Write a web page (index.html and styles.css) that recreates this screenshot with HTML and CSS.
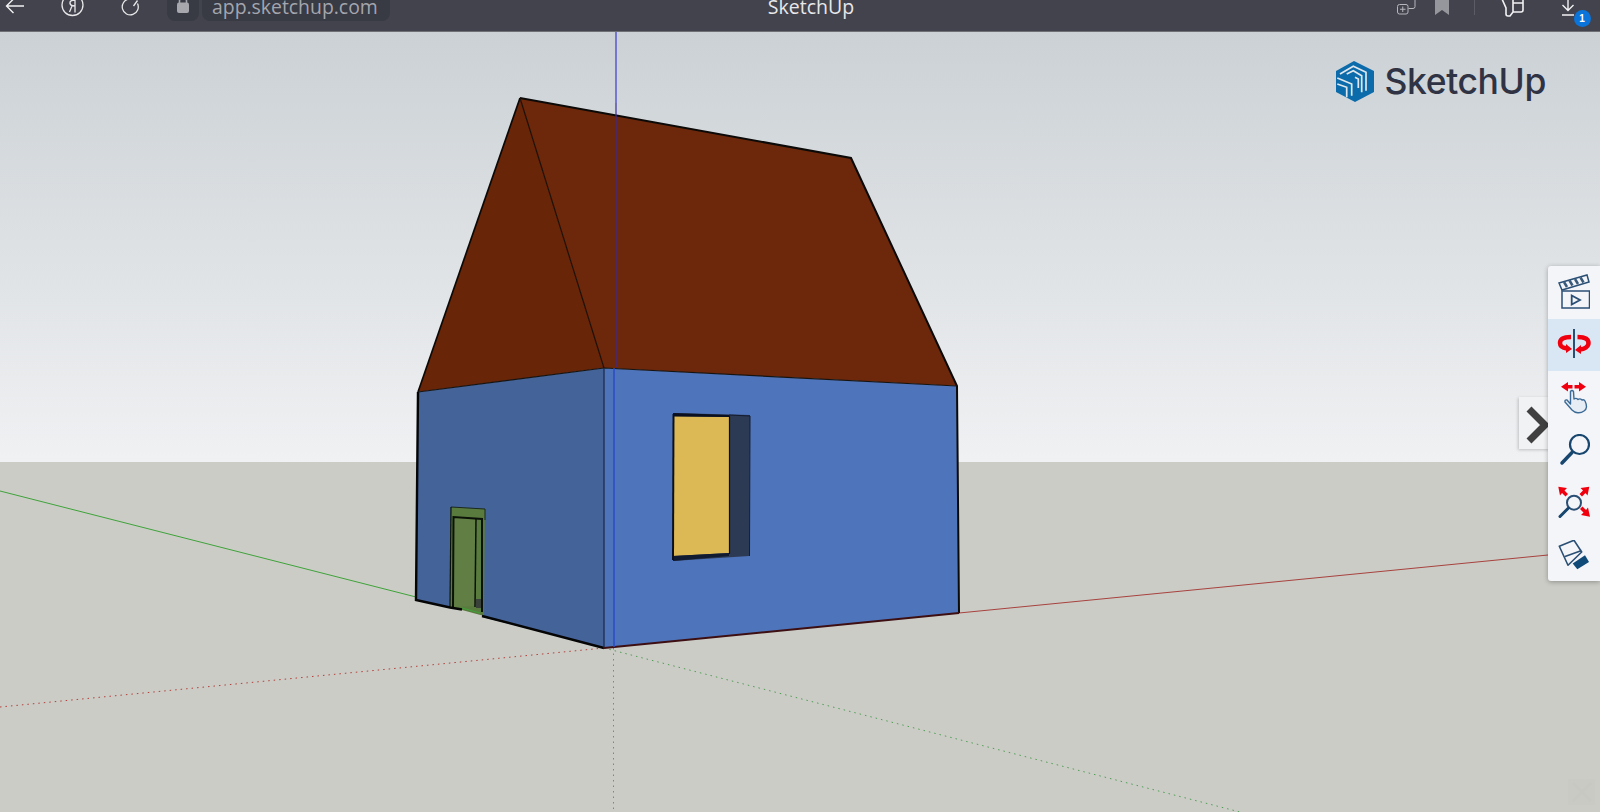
FILE: index.html
```html
<!DOCTYPE html>
<html lang="en">
<head>
<meta charset="utf-8">
<title>SketchUp</title>
<link rel="stylesheet" href="styles.css">
</head>
<body>
<div class="app">
  <header class="browser">
    <div class="nav">
      <svg class="ic back" width="26" height="20" viewBox="0 0 26 20"><path d="M21 6H3.500M10.500 -1L3.500 6L10.500 13" fill="none" stroke="#f2f2f4" stroke-width="1.400"/></svg>
      <svg class="ic yandex" width="24" height="20" viewBox="0 0 24 20"><circle cx="11.500" cy="5" r="10.500" fill="none" stroke="#e8e8ea" stroke-width="1.300"/><path d="M14 -1V12.500M14 0Q8.500 0 9 3.500Q9.500 6 14 6M11 6L8.500 12" fill="none" stroke="#e8e8ea" stroke-width="1.300"/></svg>
      <svg class="ic reload" width="20" height="20" viewBox="0 0 20 20"><path d="M17.500 3.500A8 8 0 1 1 9 -1M17.500 0.500L13.500 6" fill="none" stroke="#e8e8ea" stroke-width="1.300"/></svg>
      <div class="address">
        <span class="lock"><svg width="14" height="24" viewBox="0 0 14 24"><path d="M3.500 13V11A3.500 3.500 0 0 1 10.500 11V13" fill="none" stroke="#a6a8ae" stroke-width="1.600"/><rect x="1" y="12.500" width="12" height="10.500" rx="2" fill="#a6a8ae"/></svg></span>
        <span class="url">app.sketchup.com</span>
      </div>
    </div>
    <div class="title">SketchUp</div>
    <div class="actions">
      <svg class="ic tabs" width="22" height="16" viewBox="0 0 22 16"><rect x="1.500" y="4.500" width="10.500" height="9.500" rx="2" fill="none" stroke="#b6b7bc"/><path d="M6.750 6.500V12M4 9.250H9.500M12.500 8.500H17A2 2 0 0 0 19 6.500V0" fill="none" stroke="#b6b7bc"/></svg>
      <svg class="ic mark" width="16" height="16" viewBox="0 0 16 16"><path d="M1 -2H15V15L8 10L1 15Z" fill="#96979c"/></svg>
      <span class="sep"></span>
      <svg class="ic panel" width="26" height="18" viewBox="0 0 26 18"><path d="M1 -1L5 8V14Q5 16 7 16H9L12 12H20A2 2 0 0 0 22 10V-1M12 12V-1M12 3H22" fill="none" stroke="#f2f2f4" stroke-width="1.600"/></svg>
      <span class="download">
        <svg width="18" height="18" viewBox="0 0 18 18"><path d="M9 -2V10.500M3.500 5L9 10.500L14.500 5M3 15H15" fill="none" stroke="#f2f2f4" stroke-width="1.400"/></svg>
        <b class="badge">1</b>
      </span>
    </div>
  </header>

  <main class="viewport">
    <svg class="scene" width="1600" height="781" viewBox="0 31 1600 781">
      <defs>
        <linearGradient id="sky" x1="0" y1="31" x2="0" y2="462" gradientUnits="userSpaceOnUse">
          <stop offset="0" stop-color="#cbd1d5"/>
          <stop offset="1" stop-color="#f0f1f3"/>
        </linearGradient>
      </defs>
      <rect x="0" y="31" width="1600" height="431" fill="url(#sky)"/>
      <rect x="0" y="462" width="1600" height="350" fill="#cbccc6"/>

      <!-- axes -->
      <line x1="0" y1="491" x2="416" y2="597" stroke="#3fa33a" stroke-width="1"/>
      <line x1="959" y1="613" x2="1548" y2="555" stroke="#a8423e" stroke-width="1"/>
      <line x1="0" y1="707" x2="604" y2="648" stroke="#b4403c" stroke-width="1" stroke-dasharray="1.500 4"/>
      <line x1="604" y1="648" x2="1240" y2="812" stroke="#4f9e55" stroke-width="1" stroke-dasharray="1.500 4"/>
      <line x1="613.500" y1="648" x2="613.500" y2="812" stroke="#7a7ac8" stroke-width="1" stroke-dasharray="1.500 4"/>

      <!-- roof -->
      <polygon points="520,98 604,368 418,392" fill="#682508"/>
      <polygon points="520,98 851,158 957,386 604,368" fill="#6d270a"/>
      <!-- walls -->
      <polygon points="418,392 604,368 604,648 482,617 482,612 462,608 450,607 416,600" fill="#446399"/>
      <polygon points="604,368 957,386 959,613 604,648" fill="#4e74bb"/>

      <!-- window -->
      <polygon points="673,413 750,415 749,556 673,561" fill="#2d3a53"/>
      <polygon points="674,416 729,417 729,553 673,556" fill="#dcb954"/>
      <polygon points="673,413 729.500,415 729.500,417 673,416.500" fill="#0a1020"/>
      <polygon points="673,556 729,553 729,556 673,561" fill="#101a30"/>
      <line x1="673.500" y1="414" x2="673" y2="560" stroke="#0a1020" stroke-width="2"/>
      <line x1="729.500" y1="416" x2="729.500" y2="554" stroke="#0a1020" stroke-width="1.200"/>
      <polyline points="729,415 750,416 749.500,556" fill="none" stroke="#141c30" stroke-width="1"/>

      <!-- door -->
      <polygon points="451,507 485,509 484,616 462,610 450,607" fill="#5a7b3e"/>
      <polygon points="454,517 475,519 475,606 454,607" fill="#617f45"/>
      <polyline points="451,507 485,509 485,520" fill="none" stroke="#1a2a1c" stroke-width="1"/>
      <polyline points="453,608 453.500,517 482,519 482,612" fill="none" stroke="#0b1208" stroke-width="2"/>
      <line x1="476" y1="519" x2="475" y2="607" stroke="#0b1208" stroke-width="1.500"/>
      <line x1="451" y1="507" x2="450" y2="607" stroke="#0b1208" stroke-width="1.200"/>
      <line x1="462" y1="608" x2="480" y2="613" stroke="#3fa33a" stroke-width="1"/>
      <rect x="476" y="599" width="5" height="9" fill="#39413a"/>

      <!-- edges -->
      <path d="M520 98L851 158L957 386L959 613" fill="none" stroke="#0c0a08" stroke-width="2"/>
      <path d="M520 98L418 392" fill="none" stroke="#0c0a08" stroke-width="1.700"/>
      <path d="M418 392L416 600L450 607.500L462 609.500M482 616L604 648" fill="none" stroke="#050505" stroke-width="2.400"/>
      <path d="M520 98L604 368" fill="none" stroke="#1c0f08" stroke-width="1.200"/>
      <path d="M418 392L604 368L957 386" fill="none" stroke="#161412" stroke-width="1.200"/>
      <line x1="604" y1="368" x2="604" y2="648" stroke="#1f2c4a" stroke-width="1.300"/>
      <path d="M604 648L959 613" fill="none" stroke="#3d0f12" stroke-width="2"/>

      <!-- blue axis -->
      <line x1="616" y1="31" x2="616" y2="103" stroke="#3a3ad0" stroke-width="1.200"/>
      <line x1="616" y1="103" x2="616" y2="367" stroke="#3a2a9a" stroke-width="1.200"/>
      <line x1="614" y1="368" x2="614" y2="647" stroke="#2b4bc4" stroke-width="1.500"/>

      <!-- faint watermark -->
      <rect x="1568" y="779" width="27" height="26" fill="#c9cac4"/>
      <path d="M1573 783L1591 801M1591 783L1573 801" fill="none" stroke="#c7c8c2" stroke-width="3"/>
    </svg>

    <div class="logo">
      <svg width="40" height="42" viewBox="0 0 40 42">
        <path d="M19 0L39 10V31L20 41L1 31V10Z" fill="#0c6bab"/>
        <g fill="none" stroke="#dfe7ec" stroke-width="1.700">
          <path d="M5 13L18.300 5.300L31 11.300V29.700"/>
          <path d="M11.700 13L18.300 9.700L26.700 14.700V31.300"/>
          <path d="M20 16.300L23.300 18V27"/>
          <path d="M2.300 17L16.700 23V34.700"/>
          <path d="M2.300 23L11.700 26.300V36.300"/>
        </g>
      </svg>
      <span class="logo-text">SketchUp</span>
    </div>

    <button class="collapse" type="button" aria-label="Collapse">
      <svg width="31" height="52" viewBox="0 0 31 52"><path d="M10 12L26 28L10 44" fill="none" stroke="#404040" stroke-width="7"/></svg>
    </button>

    <nav class="tools">
      <div class="tool">
        <svg width="32" height="36" viewBox="0 0 32 36" fill="none" stroke="#2a4f75" stroke-width="1.500">
          <rect x="4" y="17" width="27.500" height="17"/>
          <path d="M1 9L29 1L31 8L4 16Z"/>
          <path d="M6 8L9 13M11.500 6.500L14.500 11.500M17 5L20 10M22.500 3.500L25.500 8.500" stroke-width="2.500" stroke="#3a5a7c"/>
          <path d="M13.700 21.500V30.500L22 26Z" stroke-width="1.800"/>
        </svg>
      </div>
      <div class="tool active">
        <svg width="34" height="32" viewBox="0 0 34 32">
          <path d="M17 0V29" stroke="#2a4f75" stroke-width="2" fill="none"/>
          <path d="M14 8C7 8 3 10 3 14C3 17 6 19 10 19.500" fill="none" stroke="#f0000f" stroke-width="4.500"/>
          <path d="M9 15L15 20L9 24Z" fill="#f0000f"/>
          <path d="M20.500 8C27 8 31.500 10 31.500 14C31.500 18 27 20 23 20.500" fill="none" stroke="#f0000f" stroke-width="4.500"/>
          <path d="M24 16L18 21L24 25Z" fill="#f0000f"/>
        </svg>
      </div>
      <div class="tool">
        <svg width="34" height="34" viewBox="0 0 34 34">
          <path d="M4 6.700L11 2V5H15.500V8.500H11V11.500ZM29 6.700L22 2V5H17.500V8.500H22V11.500Z" fill="#f0000f"/>
          <path d="M13.500 24V11.500Q15 9.500 16.500 11.500L17 19Q19 17.500 21 19.500Q23 18 25 20Q27 19 28 21C30 25 30 29 27 31C23 34 18 33 15 30L8 22Q7.500 19.500 10 20Z" fill="#e6edf4" stroke="#3b6a96" stroke-width="1.400" stroke-linejoin="round"/>
        </svg>
      </div>
      <div class="tool">
        <svg width="32" height="32" viewBox="0 0 32 32" fill="none" stroke="#17466f">
          <circle cx="21.500" cy="10.500" r="9.500" stroke-width="2.200"/>
          <path d="M14 18.500L4 29" stroke-width="3.500" stroke-linecap="round"/>
        </svg>
      </div>
      <div class="tool">
        <svg width="34" height="34" viewBox="0 0 34 34">
          <circle cx="17" cy="17.700" r="7" fill="none" stroke="#2a4f75" stroke-width="2"/>
          <path d="M11.500 23L3 31.500" stroke="#17466f" stroke-width="3" stroke-linecap="round"/>
          <path d="M1.300 1.700L10 3L7.500 5.500L11 9L8.500 11.500L5 8L3 10.500Z" fill="#f0000f"/>
          <path d="M32.300 1.700L23.500 3L26 5.500L22.500 9L25 11.500L28.500 8L30.500 10.500Z" fill="#f0000f"/>
          <path d="M33 31.700L24 30L26.500 27.500L23 24L25.500 21.500L29 25L31 22.500Z" fill="#f0000f"/>
        </svg>
      </div>
      <div class="tool">
        <svg width="32" height="30" viewBox="0 0 32 30">
          <path d="M14.700 23.500L27 15.250L31 22L19.300 29.250Z" fill="#0f4a78"/>
          <path d="M1.300 6.250L16 0.250L23.700 12L10 25.250ZM7 16.500L23.700 10.500" fill="none" stroke="#2a4f75" stroke-width="1.600" stroke-linejoin="round"/>
        </svg>
      </div>
    </nav>
  </main>
</div>
</body>
</html>
```

FILE: styles.css
```css
* {
  box-sizing: border-box;
}

html,
body {
  margin: 0;
  height: 100%;
  overflow: hidden;
}

body {
  font-family: "Open Sans", "Liberation Sans", sans-serif;
}

.app {
  display: flex;
  flex-direction: column;
  height: 812px;
}

.browser {
  position: relative;
  display: flex;
  align-items: flex-start;
  justify-content: space-between;
  flex: 0 0 32px;
  background: #43434d;
  border-bottom: 1px solid #6e7076;
  overflow: hidden;
}

.nav {
  display: flex;
  align-items: flex-start;
}

.ic {
  display: block;
  flex: none;
}

.back {
  margin-left: 3px;
}

.yandex {
  margin-left: 32px;
}

.reload {
  margin-left: 35px;
}

.address {
  display: flex;
  gap: 3px;
  margin-left: 27px;
  margin-top: -10px;
  height: 31px;
}

.lock {
  width: 32px;
  height: 31px;
  padding: 0 0 0 9px;
  border-radius: 0 0 8px 8px;
  background: #383a44;
}

.lock svg {
  display: block;
}

.url {
  height: 31px;
  padding: 0 12px 0 10px;
  border-radius: 0 0 8px 8px;
  background: #383a44;
  color: #a4a6ae;
  font-size: 19.400px;
  line-height: 33px;
}

.title {
  position: absolute;
  left: 22px;
  right: 0;
  top: -6px;
  text-align: center;
  color: #e8e8ea;
  font-size: 19.500px;
  line-height: 26px;
}

.actions {
  display: flex;
  align-items: flex-start;
  margin-right: 23px;
}

.mark {
  margin-left: 16px;
}

.sep {
  width: 1px;
  height: 15px;
  margin-left: 24px;
  background: #5c5c66;
}

.panel {
  margin-left: 26px;
}

.download {
  position: relative;
  display: block;
  width: 18px;
  height: 28px;
  margin-left: 32px;
}

.download svg {
  display: block;
}

.badge {
  position: absolute;
  left: 14.500px;
  top: 9.500px;
  width: 17px;
  height: 17px;
  border-radius: 50%;
  background: #0a74da;
  color: #fff;
  font: 700 10px/17px "Liberation Sans", sans-serif;
  text-align: center;
}

.viewport {
  position: relative;
  flex: 1;
  overflow: hidden;
}

.scene {
  position: absolute;
  left: 0;
  top: -1px;
  display: block;
}

.logo {
  position: absolute;
  top: 29px;
  right: 54px;
  display: flex;
  align-items: center;
  gap: 10px;
}

.logo-text {
  color: #2f3344;
  font-family: Inter, "Liberation Sans", sans-serif;
  font-size: 35.500px;
  font-weight: 500;
  line-height: 42px;
  letter-spacing: -0.4px;
}

.collapse {
  position: absolute;
  left: 1519px;
  top: 365px;
  display: block;
  width: 31px;
  height: 52px;
  padding: 0;
  border: 0;
  background: #f1f2f4;
  box-shadow: -1px 1px 3px rgba(0, 0, 0, 0.2);
}

.collapse svg {
  display: block;
}

.tools {
  position: absolute;
  top: 234px;
  right: 0;
  display: flex;
  flex-direction: column;
  width: 52px;
  background: #f4f5f8;
  border-radius: 3px 0 0 3px;
  box-shadow: 0 1px 5px rgba(0, 0, 0, 0.3);
}

.tool {
  display: flex;
  align-items: center;
  justify-content: center;
  height: 52.500px;
}

.tool.active {
  background: #d9e7f4;
}
```
